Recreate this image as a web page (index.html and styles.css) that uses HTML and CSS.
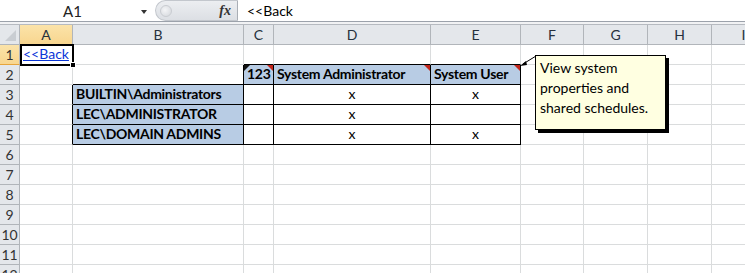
FILE: index.html
```html
<!DOCTYPE html>
<html lang="en">
<head>
    <meta charset="UTF-8">
    <title>Sheet1</title>
    <link rel="stylesheet" href="styles.css">
</head>
<body>
    <div class="formula-bar">
        <div class="name-box"><span class="name">A1</span><span class="caret"></span></div>
        <div class="fx-pill"><span class="knob"></span><span class="fx">fx</span></div>
        <div class="formula">&lt;&lt;Back</div>
    </div>
    <div class="bar-gap"></div>

    <div class="sheet">
        <!-- column headers -->
        <div class="hd corner"></div><div class="hd sel">A</div><div class="hd">B</div><div class="hd">C</div><div class="hd">D</div><div class="hd">E</div><div class="hd">F</div><div class="hd">G</div><div class="hd">H</div><div class="hd">I</div>

        <div class="rh sel">1</div><div class="c"><a class="link" href="#">&lt;&lt;Back</a></div><div class="c"></div><div class="c bk-b"></div><div class="c bk-b"></div><div class="c bk-b"></div><div class="c"></div><div class="c"></div><div class="c"></div><div class="c"></div>

        <div class="rh">2</div><div class="c"></div><div class="c bk-r bk-b"></div>
        <div class="c fill b bk-r bk-b note-cell"><span class="err"></span>123<span class="note"></span></div>
        <div class="c fill b bk-r bk-b note-cell">System Administrator<span class="note"></span></div>
        <div class="c fill b bk-r bk-b note-cell">System User<span class="note"></span></div>
        <div class="c"></div><div class="c"></div><div class="c"></div><div class="c"></div>

        <div class="rh">3</div><div class="c bk-r"></div><div class="c fill b bk-r bk-b">BUILTIN\Administrators</div><div class="c bk-r bk-b"></div><div class="c bk-r bk-b ctr">x</div><div class="c bk-r bk-b ctr">x</div><div class="c"></div><div class="c"></div><div class="c"></div><div class="c"></div>

        <div class="rh">4</div><div class="c bk-r"></div><div class="c fill b bk-r bk-b">LEC\ADMINISTRATOR</div><div class="c bk-r bk-b"></div><div class="c bk-r bk-b ctr">x</div><div class="c bk-r bk-b"></div><div class="c"></div><div class="c"></div><div class="c"></div><div class="c"></div>

        <div class="rh">5</div><div class="c bk-r"></div><div class="c fill b bk-r bk-b">LEC\DOMAIN ADMINS</div><div class="c bk-r bk-b"></div><div class="c bk-r bk-b ctr">x</div><div class="c bk-r bk-b ctr">x</div><div class="c"></div><div class="c"></div><div class="c"></div><div class="c"></div>

        <div class="rh">6</div><div class="c"></div><div class="c"></div><div class="c"></div><div class="c"></div><div class="c"></div><div class="c"></div><div class="c"></div><div class="c"></div><div class="c"></div>
        <div class="rh">7</div><div class="c"></div><div class="c"></div><div class="c"></div><div class="c"></div><div class="c"></div><div class="c"></div><div class="c"></div><div class="c"></div><div class="c"></div>
        <div class="rh">8</div><div class="c"></div><div class="c"></div><div class="c"></div><div class="c"></div><div class="c"></div><div class="c"></div><div class="c"></div><div class="c"></div><div class="c"></div>
        <div class="rh">9</div><div class="c"></div><div class="c"></div><div class="c"></div><div class="c"></div><div class="c"></div><div class="c"></div><div class="c"></div><div class="c"></div><div class="c"></div>
        <div class="rh">10</div><div class="c"></div><div class="c"></div><div class="c"></div><div class="c"></div><div class="c"></div><div class="c"></div><div class="c"></div><div class="c"></div><div class="c"></div>
        <div class="rh">11</div><div class="c"></div><div class="c"></div><div class="c"></div><div class="c"></div><div class="c"></div><div class="c"></div><div class="c"></div><div class="c"></div><div class="c"></div>
        <div class="rh">12</div><div class="c"></div><div class="c"></div><div class="c"></div><div class="c"></div><div class="c"></div><div class="c"></div><div class="c"></div><div class="c"></div><div class="c"></div>

        <!-- active cell A1 -->
        <div class="selection"><span class="handle"></span></div>

        <!-- comment on E2 -->
        <svg class="pointer" width="20" height="14" viewBox="0 0 20 14">
            <line x1="16" y1="1" x2="3" y2="9" stroke="#000" stroke-width="1"/>
            <polygon points="0,11 6,6 7,10" fill="#000"/>
        </svg>
        <div class="comment">View system properties and shared schedules.</div>
    </div>
</body>
</html>
```

FILE: styles.css
```css
:root {
    --grid: #dadcdd;
    --head-bg: #e4e7eb;
    --head-line: #b1b5ba;
    --sel-head: #f8d68f;
    --fill: #b8cce4;
    --font-cell: 'Lato', 'Liberation Sans', sans-serif;
}
* { box-sizing: border-box; }
html, body {
    margin: 0;
    background: #fff;
    overflow: hidden;
}
body {
    font-family: var(--font-cell);
    font-size: 14px;
    color: #000;
    width: 745px;
    height: 273px;
}

/* Formula bar */
.formula-bar {
    display: flex;
    height: 22px;
    border-bottom: 1px solid #9ca2ab;
    background: #fff;
}
.name-box {
    width: 155px;
    display: flex;
    align-items: center;
}
.name-box .name {
    flex: 1;
    text-align: center;
    padding-left: 4px;
    font-size: 15px;
    color: #222;
}
.caret {
    width: 0; height: 0;
    border-left: 3px solid transparent;
    border-right: 3px solid transparent;
    border-top: 4px solid #333;
    margin-right: 8px;
    margin-top: 2px;
}
.fx-pill {
    width: 83px;
    display: flex;
    align-items: center;
    justify-content: space-between;
    background: linear-gradient(#eceef1, #dcdfe4);
    border: 1px solid #c3c7cd;
    border-right-color: #a9aeb5;
    border-radius: 11px 0 0 11px;
    padding: 0 6px 0 4px;
}
.knob {
    width: 12px; height: 12px;
    border-radius: 50%;
    background: radial-gradient(circle at 40% 40%, #f4f5f7, #d3d6db);
    border: 1px solid #c9ccd1;
}
.fx {
    font-family: 'Liberation Serif', serif;
    font-style: italic;
    font-weight: bold;
    font-size: 14px;
    color: #333;
}
.formula {
    flex: 1;
    padding-left: 9px;
    display: flex;
    align-items: center;
    font-size: 14px;
}
.bar-gap {
    height: 2px;
    background: #f1f2f4;
    border-bottom: 1px solid #b6bac0;
    box-sizing: content-box;
}

/* Sheet grid */
.sheet {
    position: relative;
    display: grid;
    grid-template-columns: 20px 53px 171px 30px 157px 90px 63px 64px 64px 64px;
    grid-auto-rows: 20px;
}
.hd, .rh {
    background: var(--head-bg);
    border-right: 1px solid var(--head-line);
    border-bottom: 1px solid var(--head-line);
    color: #27313d;
    display: flex;
    align-items: center;
    justify-content: center;
    font-size: 14px;
}
.hd.corner {
    position: relative;
}
.hd.corner::after {
    content: "";
    position: absolute;
    right: 3px; bottom: 3px;
    width: 11px; height: 11px;
    background: #c9cdd2;
    clip-path: polygon(100% 0, 100% 100%, 0 100%);
}
.hd.sel, .rh.sel {
    background: linear-gradient(#fbe3a9, var(--sel-head));
    border-color: #f0b650 var(--head-line) #e6a53c var(--head-line);
}
.rh {
    color: #333;
}
.c {
    border-right: 1px solid var(--grid);
    border-bottom: 1px solid var(--grid);
    display: flex;
    align-items: flex-end;
    padding: 0 3px 1px;
    white-space: nowrap;
    line-height: 18px;
}
.c.bk-r { border-right-color: #000; }
.c.bk-b { border-bottom-color: #000; }
.c.fill { background: var(--fill); }
.c.b { font-weight: bold; letter-spacing: -0.3px; }
.c.ctr { justify-content: center; }
.link {
    color: #0b36d8;
    text-decoration: underline;
}

/* Comment indicators */
.note-cell { position: relative; }
.note {
    position: absolute;
    top: 0; right: 0;
    width: 6px; height: 6px;
    background: #c2261c;
    clip-path: polygon(0 0, 100% 0, 100% 100%);
}
.err {
    position: absolute;
    top: 0; left: 0;
    width: 6px; height: 6px;
    background: #111;
    clip-path: polygon(0 0, 100% 0, 0 100%);
}

/* Active cell */
.selection {
    position: absolute;
    left: 20px; top: 19px;
    width: 54px; height: 22px;
    border: 2px solid #000;
}
.handle {
    position: absolute;
    right: -4px; bottom: -4px;
    width: 6px; height: 6px;
    background: #000;
    border: 1px solid #fff;
}

/* Comment box */
.comment {
    position: absolute;
    left: 535px; top: 30px;
    width: 131px; height: 75px;
    background: #ffffe1;
    border: 1px solid #000;
    box-shadow: 3px 3px 0 #000;
    padding: 2px 4px;
    font-size: 14px;
    line-height: 20px;
    color: #000;
}
.pointer {
    position: absolute;
    left: 520px; top: 30px;
}
```
